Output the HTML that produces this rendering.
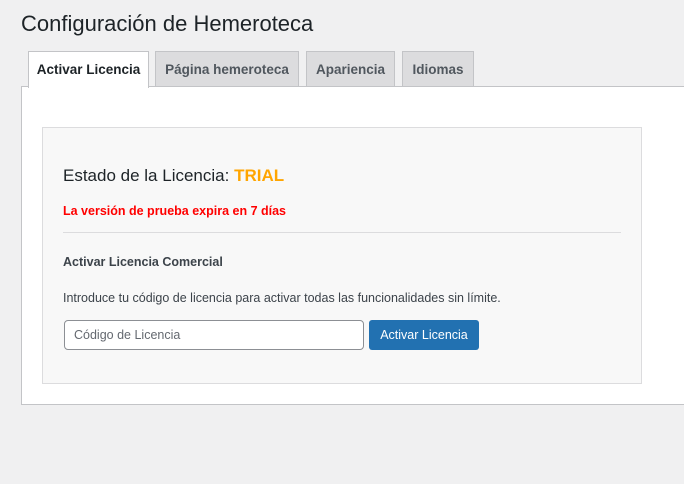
<!DOCTYPE html>
<html><head><meta charset="utf-8"><style>
*{margin:0;padding:0;box-sizing:border-box}
body{width:684px;height:484px;background:#f0f0f1;font-family:"Liberation Sans",sans-serif;color:#1d2327;position:relative;overflow:hidden}
.a{position:absolute;white-space:nowrap}
.tab{position:absolute;top:51px;height:36px;border:1px solid #c3c4c7;border-bottom:none;background:#dcdcde;color:#50575e;font-weight:bold;font-size:13.5px;text-align:center;line-height:36px}
.tab.on{background:#fff;color:#1d2327;height:37px;z-index:2}
</style></head><body>
<div class="a" style="left:21px;top:11px;font-size:22px;color:#1d2327">Configuración de Hemeroteca</div>
<div class="tab on" style="left:28px;width:121px">Activar Licencia</div>
<div class="tab" style="left:155px;width:144px">Página hemeroteca</div>
<div class="tab" style="left:306px;width:89px">Apariencia</div>
<div class="tab" style="left:402px;width:72px">Idiomas</div>
<div class="a" style="left:21px;top:86px;width:680px;height:319px;background:#fff;border:1px solid #c3c4c7;z-index:1"></div>
<div class="a" style="left:42px;top:127px;width:600px;height:257px;background:#f8f8f8;border:1px solid #dcdcde;z-index:3"></div>
<div class="a" style="left:63px;top:166px;font-size:17px;z-index:4">Estado de la Licencia: <b style="color:#ffa500">TRIAL</b></div>
<div class="a" style="left:63px;top:204px;font-size:12.5px;font-weight:bold;color:#f00;z-index:4">La versión de prueba expira en 7 días</div>
<div class="a" style="left:63px;top:232px;width:558px;height:1px;background:#dcdcde;z-index:4"></div>
<div class="a" style="left:63px;top:255px;font-size:12.5px;font-weight:bold;color:#3c434a;z-index:4">Activar Licencia Comercial</div>
<div class="a" style="left:63px;top:291px;font-size:12.5px;color:#3c434a;z-index:4">Introduce tu código de licencia para activar todas las funcionalidades sin límite.</div>
<div class="a" style="left:64px;top:320px;width:300px;height:30px;border:1px solid #8c8f94;border-radius:4px;background:#fff;font-size:12.5px;color:#646970;padding-left:9px;line-height:29px;z-index:4">Código de Licencia</div>
<div class="a" style="left:369px;top:320px;width:110px;height:30px;border-radius:3px;background:#2271b1;color:#fff;font-size:12.5px;text-align:center;line-height:31px;z-index:4">Activar Licencia</div>
</body></html>
